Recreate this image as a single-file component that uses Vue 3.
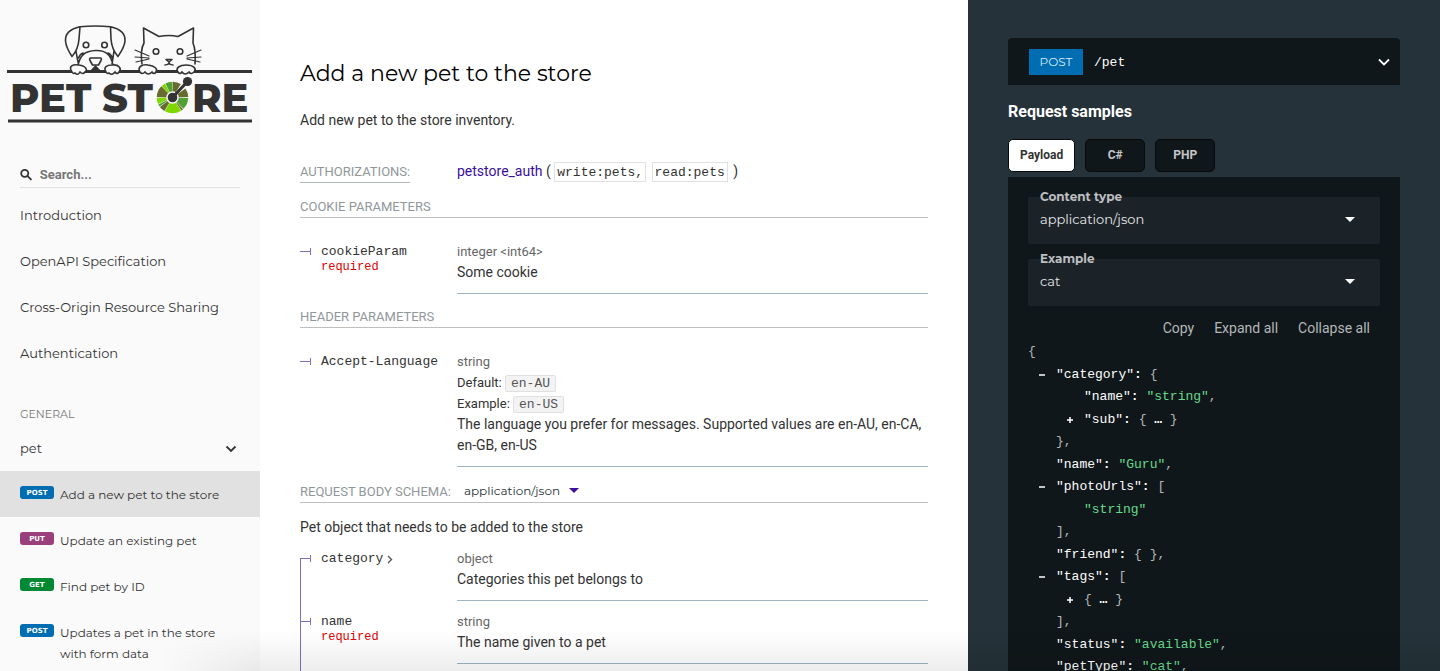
<script setup>
import { ref } from 'vue'

const links = ['Introduction', 'OpenAPI Specification', 'Cross-Origin Resource Sharing', 'Authentication']

const operations = [
  { method: 'post', title: 'Add a new pet to the store', active: true },
  { method: 'put', title: 'Update an existing pet' },
  { method: 'get', title: 'Find pet by ID' },
  { method: 'post', title: 'Updates a pet in the store with form data' },
]

const tabs = ['Payload', 'C#', 'PHP']
const activeTab = ref('Payload')
const search = ref('')

// Wheel of the logo: [start angle, sweep, colour], clockwise from three o'clock
const wheel = [
  [2, 44, '#50a035'],
  [48, 7, '#686b2f'],
  [57, 62, '#80d700'],
  [121, 22, '#686b2f'],
  [145, 9, '#50a035'],
  [156, 23, '#80d700'],
  [182, 43, '#686b2f'],
  [227, 14, '#80d700'],
  [243, 27, '#50a035'],
  [272, 30, '#686b2f'],
  [325, 33, '#686b2f'],
]

// Each line: indent level, optional toggle sign, key, opening/closing punctuation, string value
const lines = [
  { level: 0, punct: '{' },
  { level: 1, toggle: '-', key: 'category', punct: '{' },
  { level: 2, key: 'name', value: 'string', end: ',' },
  { level: 2, toggle: '+', key: 'sub', punct: '{ ', more: '…', end: ' }' },
  { level: 1, punct: '},' },
  { level: 1, key: 'name', value: 'Guru', end: ',' },
  { level: 1, toggle: '-', key: 'photoUrls', punct: '[' },
  { level: 2, value: 'string' },
  { level: 1, punct: '],' },
  { level: 1, key: 'friend', punct: '{ },' },
  { level: 1, toggle: '-', key: 'tags', punct: '[' },
  { level: 2, toggle: '+', punct: '{ ', more: '…', end: ' }' },
  { level: 1, punct: '],' },
  { level: 1, key: 'status', value: 'available', end: ',' },
  { level: 1, key: 'petType', value: 'cat', end: ',' },
]
</script>

<template>
  <div class="page">
    <aside class="sidebar">
      <a class="logo" href="#" aria-label="Pet Store">
        <svg viewBox="0 0 260 130" role="img" aria-hidden="true">
          <g fill="none" stroke="#333" stroke-width="1.6" stroke-linecap="round" stroke-linejoin="round">
            <path d="M80 26.800Q95.500 25.200 110.500 26.800M80 26.800C70 29 65 34 65.500 41C66 47 69 52 72 56.500C76 52 78.500 46 79 39Q79.500 33 80 26.800M110.500 26.800C120 29 125.500 34 125 41C124.500 47 121 52 118 56.500C114 52 111.500 46 111 39ZM76 51Q77 58 78.500 64M114 51Q113 58 112 64M78 65C80 56 84 51 95.500 50.500S111 56 113 65M78.500 58Q80 54 83 53M112.500 58Q111 54 108 53" />
            <circle cx="86" cy="45" r="2.800" /><circle cx="104.500" cy="45" r="2.800" />
            <path d="M90.500 58H100.500Q102 58.500 101 60.500L98.500 65H92.500L90 60.500Q89 58.500 90.500 58Z" />
            <path d="M143.500 28L159 36.500Q169 34.500 178 36.500L193.500 28L193 43Q196 50 195 64M143.500 28L144 43Q140 50 142 64" />
            <circle cx="156" cy="51.500" r="2.800" /><circle cx="180" cy="51.500" r="2.800" />
            <path d="M166 59.500H172L169 62ZM169 62V64M165 65Q168 65 169 63Q170 65 173 65" />
            <path d="M135 50L149 56M135 57L149 58M136 62L149 59M201 50L187 56M201 57L187 58M200 62L187 59" stroke-width="1.200" />
          </g>
          <path d="M7 71.500H252M8 121H252" stroke="#333" stroke-width="2.800" />
          <path d="M90 71L95.500 65L101 71Z" fill="#333" />
          <g fill="#fafafa" stroke="#333" stroke-width="1.600">
            <path d="M72 72C68 66 73 64 79 65C86 66 88 70 85 72Q83 75 80 72Q78 76 75 73Q73 74 72 72Z" />
            <path d="M106 72C103 67 107 65 112 65C119 64 122 69 119 72Q117 75 115 72Q112 76 109 73Q107 74 106 72Z" />
            <path d="M140 72C137 67 142 64 148 65C155 66 158 69 156 72Q154 75 152 72Q148 76 145 72Q142 75 140 72Z" />
            <path d="M178 72C175 68 180 65 186 65C194 65 197 69 194 72Q191 75 189 72Q185 76 182 72Q180 75 178 72Z" />
          </g>
          <g class="wordmark">
            <text x="10" y="112">PET</text>
            <text x="102" y="112">ST</text>
            <text x="192" y="112">RE</text>
          </g>
          <circle
            v-for="[start, sweep, colour] in wheel" :key="start"
            cx="172.500" cy="97.500" r="11" fill="none" stroke-width="9.500" pathLength="360"
            :stroke="colour" :stroke-dasharray="`${sweep} ${360 - sweep}`" :stroke-dashoffset="-start"
          />
          <path d="M172.500 97.500L187.500 81.500" stroke="#333" stroke-width="3" />
          <circle cx="172.500" cy="97.500" r="4.800" fill="#333" /><circle cx="187.500" cy="81.500" r="4.600" fill="#333" />
        </svg>
      </a>

      <label class="search">
        <svg viewBox="0 0 14 14" aria-hidden="true"><circle cx="5.200" cy="5.200" r="3.900" /><path d="M8 8L12.600 12.300" /></svg>
        <input v-model="search" type="text" placeholder="Search..." aria-label="Search" />
      </label>

      <nav>
        <ul class="menu">
          <li v-for="link in links" :key="link"><a href="#">{{ link }}</a></li>
        </ul>
        <h2 class="group">GENERAL</h2>
        <button class="tag" type="button">
          pet
          <svg viewBox="0 0 12 8" aria-hidden="true"><path d="M1.500 1.500L6 6L10.500 1.500" /></svg>
        </button>
        <ul class="menu">
          <li v-for="op in operations" :key="op.title">
            <a href="#" class="operation" :class="{ active: op.active }">
              <span class="verb" :class="op.method">{{ op.method.toUpperCase() }}</span>
              <span>{{ op.title }}</span>
            </a>
          </li>
        </ul>
      </nav>
    </aside>

    <main class="content">
      <section class="docs">
        <h1>Add a new pet to the store</h1>
        <p class="lead">Add new pet to the store inventory.</p>

        <div class="auth">
          <h5><span>AUTHORIZATIONS:</span></h5>
          <div class="scopes">
            <a href="#">petstore_auth</a> ( <code>write:pets,</code> <code>read:pets</code> )
          </div>
        </div>

        <h5 class="heading">COOKIE PARAMETERS</h5>
        <table class="params">
          <tbody>
            <tr>
              <th scope="row"><span class="name">cookieParam</span><span class="required">required</span></th>
              <td><div class="type">integer &lt;int64&gt;</div><div>Some cookie</div></td>
            </tr>
          </tbody>
        </table>

        <h5 class="heading">HEADER PARAMETERS</h5>
        <table class="params">
          <tbody>
            <tr>
              <th scope="row"><span class="name">Accept-Language</span></th>
              <td>
                <div class="type">string</div>
                <div class="sample">Default: <code>en-AU</code></div>
                <div class="sample">Example: <code>en-US</code></div>
                <div>The language you prefer for messages. Supported values are en-AU, en-CA, en-GB, en-US</div>
              </td>
            </tr>
          </tbody>
        </table>

        <div class="heading body-heading">
          <h5>REQUEST BODY SCHEMA:</h5>
          <div class="picker">
            <select aria-label="Request body content type"><option>application/json</option><option>application/xml</option></select>
            <svg viewBox="0 0 10 5" aria-hidden="true"><path d="M0 0H10L5 5Z" /></svg>
          </div>
        </div>
        <p class="body-text">Pet object that needs to be added to the store</p>
        <table class="params tree">
          <tbody>
            <tr>
              <th scope="row">
                <button class="name" type="button">category<svg viewBox="0 0 6 9" aria-hidden="true"><path d="M1 1L4.500 4.500L1 8" /></svg></button>
              </th>
              <td><div class="type">object</div><div>Categories this pet belongs to</div></td>
            </tr>
            <tr>
              <th scope="row"><span class="name">name</span><span class="required">required</span></th>
              <td><div class="type">string</div><div>The name given to a pet</div></td>
            </tr>
          </tbody>
        </table>
        <div class="trunk"></div>
      </section>

      <section class="samples">
        <button class="endpoint" type="button">
          <span class="http">POST</span>
          <span class="path">/pet</span>
          <svg viewBox="0 0 12 8" aria-hidden="true"><path d="M1 1.500L6 6.500L11 1.500" /></svg>
        </button>
        <h3>Request samples</h3>
        <div class="tabs" role="tablist">
          <button
            v-for="tab in tabs" :key="tab" type="button" role="tab"
            :aria-selected="tab === activeTab" :class="{ selected: tab === activeTab }" @click="activeTab = tab"
          >{{ tab }}</button>
        </div>
        <div class="panel">
          <div class="field">
            <label for="content-type">Content type</label>
            <select id="content-type"><option>application/json</option><option>application/xml</option></select>
            <svg viewBox="0 0 10 5" aria-hidden="true"><path d="M0 0H10L5 5Z" /></svg>
          </div>
          <div class="field">
            <label for="example">Example</label>
            <select id="example"><option>cat</option><option>dog</option></select>
            <svg viewBox="0 0 10 5" aria-hidden="true"><path d="M0 0H10L5 5Z" /></svg>
          </div>
          <div class="actions">
            <button type="button">Copy</button>
            <button type="button">Expand all</button>
            <button type="button">Collapse all</button>
          </div>
          <ul class="json">
            <li v-for="(line, i) in lines" :key="i" :class="'level-' + line.level">
              <button v-if="line.toggle" class="toggle" type="button" :aria-label="line.toggle === '-' ? 'collapse' : 'expand'">
                <svg viewBox="0 0 8 8" aria-hidden="true"><path :d="line.toggle === '-' ? 'M1 4H7' : 'M1 4H7M4 1V7'" /></svg>
              </button>
              <code><template v-if="line.key"><span class="key">"{{ line.key }}"</span><b>: </b></template>{{ line.punct }}<b v-if="line.more">{{ line.more }}</b><span v-if="line.value" class="string">"{{ line.value }}"</span>{{ line.end }}</code>
            </li>
          </ul>
        </div>
      </section>
    </main>
    <div class="fade" aria-hidden="true"></div>
  </div>
</template>

<style>
body {
  margin: 0;
  background: #fff;
}
</style>

<style scoped>
.page {
  --display: Montserrat, Inter, sans-serif;
  --mono: "Liberation Mono", monospace;
  display: flex;
  height: 100vh;
  overflow: hidden;
  position: relative;
  font: 14px/21px Roboto, sans-serif;
  color: #333;
}
.page * {
  box-sizing: border-box;
}
h1, h2, h3, h5, p, ul {
  margin: 0;
  padding: 0;
  font-weight: 400;
}
ul {
  list-style: none;
}
a {
  color: inherit;
  text-decoration: none;
}
button, select, input {
  margin: 0;
  padding: 0;
  border: 0;
  background: none;
  color: inherit;
  font: inherit;
  appearance: none;
  outline: 0;
}
button {
  cursor: pointer;
}

/* Sidebar */
.sidebar {
  flex: 0 0 260px;
  background: #fafafa;
  font-family: var(--display);
}
.logo svg {
  display: block;
  width: 100%;
}
.wordmark {
  font: 800 40px/1 var(--display);
  fill: #333;
}
.search {
  display: flex;
  align-items: center;
  gap: 7px;
  height: 26px;
  margin: 32px 20px 5px;
  border-bottom: 1px solid #e1e1e1;
}
.search svg {
  width: 14px;
  height: 14px;
  fill: none;
  stroke: #333;
  stroke-width: 2;
}
.search input {
  width: 100%;
  font: 700 13px/20px Roboto, sans-serif;
}
.search input::placeholder {
  color: #777;
  opacity: 1;
}
.menu a {
  display: block;
  padding: 12px 20px 13px;
  font-size: 13px;
}
.group {
  padding: 27px 20px 0;
  font-size: 11px;
  line-height: 21px;
  color: #777;
}
.tag {
  display: flex;
  align-items: center;
  justify-content: space-between;
  width: 100%;
  padding: 13px 23px 12px 20px;
  font-size: 13px;
}
.tag svg {
  width: 12px;
  height: 8px;
  fill: none;
  stroke: #333;
  stroke-width: 1.8;
}
.menu .operation {
  display: flex;
  align-items: flex-start;
  gap: 6px;
  padding: 13px 20px 12px;
  font-size: 12px;
}
.menu .active {
  background: #e1e1e1;
}
.verb {
  flex: 0 0 34px;
  height: 13px;
  margin-top: 2px;
  border-radius: 3px;
  background: #006db3;
  color: #fff;
  font: 700 7px/14px "DejaVu Sans", sans-serif;
  text-align: center;
}
.put { background: #9b3f7c; }
.get { background: #008833; }

/* Middle column */
.content {
  display: flex;
  flex: 1;
  min-width: 0;
}
.docs {
  flex: 0 0 60%;
  padding: 59px 40px 0;
}
h1 {
  font: 400 22px/30px var(--display);
  color: #000;
}
.lead {
  padding: 21px 0 30px;
}
h5 {
  font-size: 13px;
  line-height: 20px;
  color: #90979a;
}
.auth {
  display: flex;
  align-items: flex-start;
}
.auth h5 {
  width: 25%;
}
.auth h5 span {
  display: inline-block;
  padding-top: 1px;
  border-bottom: 1px solid #b3b8bb;
}
.scopes a {
  color: #3a10a0;
}
.scopes code {
  display: inline-block;
  height: 20px;
  margin-right: 2px;
  padding: 0 2px;
  border: 1px solid #e1e1e1;
  font: 13px/20px var(--mono);
}
.heading {
  border-bottom: 1px solid #bfbfbf;
}
.auth + .heading {
  margin-top: 14px;
}
.params {
  width: 100%;
  margin-top: 23px;
  border-collapse: collapse;
  table-layout: fixed;
}
.params th {
  position: relative;
  width: 25%;
  padding: 0 0 0 21px;
  vertical-align: top;
  text-align: left;
  font: 13px/20px var(--mono);
}
.params th::before {
  content: "";
  position: absolute;
  top: 10px;
  left: 0;
  width: 11px;
  height: 1px;
  background: #7f6fbf;
}
.params th::after {
  content: "";
  position: absolute;
  top: 7px;
  left: 10px;
  width: 1px;
  height: 7px;
  background: #7f6fbf;
}
.params td {
  padding: 0 0 10px;
  border-bottom: 1px solid #9fb4be;
}
.params + .heading {
  margin-top: 13px;
}
.name {
  display: flex;
  align-items: center;
  height: 20px;
  padding-top: 2px;
  white-space: nowrap;
}
.name svg {
  width: 6px;
  height: 9px;
  margin-left: 4px;
  fill: none;
  stroke: #555;
  stroke-width: 1.4;
}
.required {
  display: block;
  font-size: 12px;
  line-height: 12px;
  color: #e00000;
}
.type {
  font-size: 13px;
  color: #666;
}
.sample {
  font-size: 13px;
}
.sample code {
  display: inline-block;
  padding: 0 5px;
  border: 1px solid #e0e0e0;
  border-radius: 2px;
  background: #f3f3f3;
  color: #555;
  font: 13px/15px var(--mono);
}
.body-heading {
  display: flex;
  gap: 13px;
  padding-top: 2px;
}
.picker {
  display: flex;
  align-items: center;
  padding-bottom: 3px;
  color: #263238;
  font-family: var(--display);
}
.picker select {
  width: 105px;
  height: 17px;
  font-size: 12px;
  line-height: 17px;
}
.picker svg {
  width: 10px;
  height: 5px;
  fill: #3a10a0;
}
.body-text {
  padding-top: 14px;
}
.tree {
  margin-top: 10px;
}
.tree th {
  background: linear-gradient(#7f6fbf, #7f6fbf) 0 0 / 1px 100% no-repeat;
}
.tree tr:first-child th {
  background-position: 0 10px;
}
.tree tr + tr th {
  padding-top: 10px;
}
.tree tr + tr th::before {
  top: 20px;
}
.tree tr + tr th::after {
  top: 17px;
}
.tree tr + tr td {
  padding-top: 10px;
}
.trunk {
  width: 1px;
  height: 40px;
  background: #7f6fbf;
}

/* Right column */
.samples {
  flex: 1;
  padding: 38px 40px 0;
  background: #253239;
}
.endpoint {
  display: flex;
  align-items: center;
  width: 100%;
  height: 47px;
  padding: 0 10px 0 21px;
  border-radius: 4px 4px 0 0;
  background: #10171a;
  color: #fff;
}
.http {
  min-width: 54px;
  padding: 0 10px;
  background: #006db3;
  color: #d5eaf8;
  font: 12px/26px var(--display);
}
.path {
  flex: 1;
  padding: 2px 11px 0;
  text-align: left;
  font: 13px/20px var(--mono);
}
.endpoint svg {
  width: 12px;
  height: 8px;
  fill: none;
  stroke: #fff;
  stroke-width: 1.8;
}
h3 {
  padding: 16px 0;
  font: 700 16px/22px Roboto, sans-serif;
  color: #fff;
}
.tabs {
  display: flex;
  gap: 10px;
  padding-bottom: 5px;
}
.tabs button {
  min-width: 60px;
  height: 33px;
  padding: 0 11px;
  border: 1px solid #07090b;
  border-radius: 5px;
  background: #10171a;
  color: #c4c6c7;
  font-size: 12px;
  font-weight: 700;
}
.tabs .selected {
  background: #fff;
  color: #333;
}
.panel {
  padding: 20px 20px 0;
  background: #10171a;
}
.field {
  position: relative;
  height: 47px;
  margin-bottom: 15px;
  border-radius: 2px;
  background: #1b2228;
  color: #e4e6e7;
  font-family: var(--display);
}
.field label {
  position: absolute;
  top: -11px;
  left: 12px;
  font-size: 12px;
  font-weight: 700;
  color: #bdbfc0;
}
.field select {
  width: 100%;
  height: 100%;
  padding: 0 12px 2px;
  font-size: 13px;
}
.field svg {
  position: absolute;
  top: 20px;
  right: 25px;
  width: 10px;
  height: 5px;
  fill: #fff;
}
.actions {
  display: flex;
  justify-content: flex-end;
  gap: 20px;
  padding-right: 10px;
  margin-bottom: 5px;
  line-height: 15px;
  color: #b3b6b8;
}
.json {
  font-size: 15px;
  line-height: 1.5em;
  color: #b4b7b8;
}
.json li {
  position: relative;
}
.json code {
  display: block;
  font-family: var(--mono);
  font-size: 13px;
  white-space: pre;
}
.json b,
.key {
  color: #fff;
}
.string {
  color: #66d98c;
}
.level-1 {
  padding-left: 28px;
}
.level-2 {
  padding-left: 56px;
}
.toggle {
  position: absolute;
  top: 0;
  display: flex;
  align-items: center;
  height: 100%;
  margin-left: -18px;
}
.toggle svg {
  width: 8px;
  height: 8px;
  stroke: #fff;
  stroke-width: 1.5;
}

/* Soft shade along the lower edge of the window */
.fade {
  position: absolute;
  right: 0;
  bottom: 0;
  left: 160px;
  height: 40px;
  background: linear-gradient(transparent, rgba(0, 0, 0, 0.07));
  mask-image: linear-gradient(90deg, transparent, #000 100px);
  pointer-events: none;
}
</style>
